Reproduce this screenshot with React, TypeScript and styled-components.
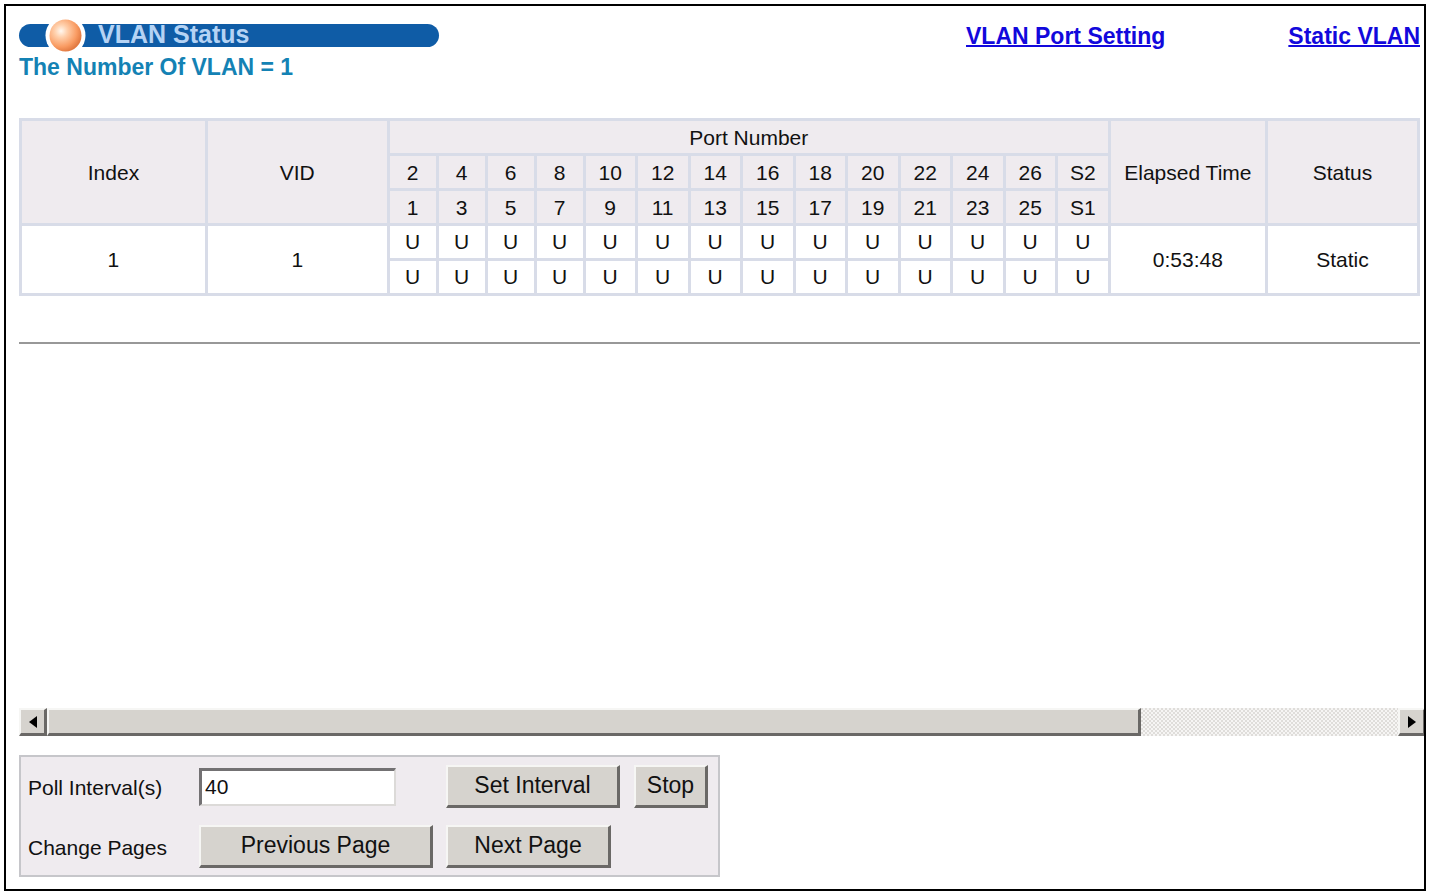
import React, { useState } from "react";
import styled, { createGlobalStyle } from "styled-components";

const GlobalStyle = createGlobalStyle`
  *, *::before, *::after { box-sizing: border-box; }
  body {
    margin: 0;
    background: #fff;
    color: #111;
    font-family: "Liberation Sans", Arial, Helvetica, sans-serif;
    font-size: 21px;
  }
`;

const Frame = styled.div`
  display: flex;
  flex-direction: column;
  min-height: calc(100vh - 8px);
  margin: 4px 3px 4px 4px;
  padding: 18px 0 12px 13px;
  border: 2px solid #000;
  overflow: hidden;
`;

const Content = styled.main`
  flex: 1;
  padding-right: 4px;
`;

const Header = styled.header`
  display: flex;
  align-items: flex-start;
  justify-content: space-between;
`;

const TitleBar = styled.div`
  display: flex;
  align-items: flex-start;
  width: 420px;
  height: 23px;
  padding-left: 26px;
  border-radius: 12px;
  background: #0f5ca6;
`;

const Ball = styled.svg`
  flex: none;
  width: 40px;
  height: 23px;
  overflow: visible;
`;

const Title = styled.h1`
  margin: 0 0 0 13px;
  color: #b5d3f4;
  font-size: 25px;
  line-height: 20px;
`;

const Links = styled.nav`
  display: flex;
  gap: 123px;
`;

const NavLink = styled.a`
  color: #1208dc;
  font-size: 23px;
  font-weight: bold;
  line-height: 25px;
  text-decoration-thickness: 2px;
  white-space: nowrap;
`;

const Summary = styled.h2`
  margin: 5px 0 38px;
  color: #1482b4;
  font-size: 23px;
  line-height: 26px;
`;

const Table = styled.table`
  width: 100%;
  table-layout: fixed;
  border-collapse: collapse;
  text-align: center;
`;

const Col = styled.col<{ $w?: string }>`
  width: ${(p) => p.$w ?? "auto"};
`;

const HeadCell = styled.th`
  height: 35px;
  padding: 2px 0 0;
  border: 3px solid #d8dce8;
  background: #efebef;
  font-weight: normal;
  line-height: 24px;
  white-space: nowrap;
`;

const Cell = styled.td`
  height: 35px;
  padding: 0;
  border: 3px solid #d8dce8;
  line-height: 24px;
`;

const Rule = styled.hr`
  height: 2px;
  margin: 46px 0 0;
  border: 0;
  background: #989898;
`;

const ScrollBar = styled.div`
  display: flex;
  height: 28px;
  margin: 0 -2px 19px 0;
`;

const raised = `
  border-style: solid;
  border-width: 2px 3px 3px 2px;
  border-color: #f6f6f4 #6a6866 #6a6866 #f6f6f4;
  background: #d6d3ce;
`;

const ArrowButton = styled.button`
  display: flex;
  flex: none;
  align-items: center;
  justify-content: center;
  width: 28px;
  padding: 0;
  ${raised}
`;

const Track = styled.div`
  flex: 1;
  background: repeating-conic-gradient(#dfddda 0 25%, #f6f5f4 0 50%) 0 0 / 4px 4px;
`;

const Thumb = styled.div`
  width: 81%;
  height: 100%;
  ${raised}
`;

const Panel = styled.form`
  display: grid;
  grid-template-columns: 171px 247px 188px auto;
  grid-auto-rows: 43px;
  row-gap: 17px;
  align-items: center;
  justify-items: start;
  align-self: flex-start;
  padding: 8px 10px 7px 7px;
  border: 2px solid #c6c6ca;
  background: #efebef;
  white-space: nowrap;
`;

const Label = styled.label`
  padding-top: 2px;
  line-height: 24px;
`;

const PanelText = styled.span`
  padding-top: 2px;
  line-height: 24px;
`;

const TextBox = styled.input`
  width: 197px;
  height: 38px;
  padding: 0 3px;
  border-style: solid;
  border-width: 3px 2px 2px 3px;
  border-color: #737173 #dcdad8 #dcdad8 #737173;
  background: #fff;
  color: #111;
  font: inherit;
`;

const Button = styled.button<{ $width: number }>`
  width: ${(p) => p.$width}px;
  height: 43px;
  padding: 0 0 2px;
  ${raised}
  color: #111;
  font: inherit;
  font-size: 23px;
`;

const upper = ["2", "4", "6", "8", "10", "12", "14", "16", "18", "20", "22", "24", "26", "S2"];
const lower = ["1", "3", "5", "7", "9", "11", "13", "15", "17", "19", "21", "23", "25", "S1"];

// Single-digit ports get the narrower columns.
const portWidth = (i: number) => (i < 4 ? "49px" : i % 2 ? "53px" : "52px");

export default function App() {
  const [interval, setPollInterval] = useState("40");

  return (
    <>
      <GlobalStyle />
      <Frame>
        <Content>
          <Header>
            <TitleBar>
              <Ball viewBox="0 0 40 23" aria-hidden="true">
                <defs>
                  <radialGradient id="ball" cx="36%" cy="36%" r="66%">
                    <stop offset="0" stopColor="#fff8f0" />
                    <stop offset="0.3" stopColor="#ffd0ac" />
                    <stop offset="0.75" stopColor="#f99b62" />
                    <stop offset="1" stopColor="#e27a42" />
                  </radialGradient>
                </defs>
                <circle cx="20.5" cy="11.5" r="20" fill="#fff" />
                <circle cx="20.5" cy="11.5" r="16" fill="url(#ball)" />
              </Ball>
              <Title>VLAN Status</Title>
            </TitleBar>
            <Links>
              <NavLink href="#port-setting">VLAN Port Setting</NavLink>
              <NavLink href="#static-vlan">Static VLAN</NavLink>
            </Links>
          </Header>
          <Summary>The Number Of VLAN = 1</Summary>
          <Table>
            <colgroup>
              <Col $w="13.3%" />
              <Col $w="13%" />
              {upper.map((port, i) => (
                <Col key={port} $w={portWidth(i)} />
              ))}
              <Col $w="157px" />
              <Col />
            </colgroup>
            <thead>
              <tr>
                <HeadCell rowSpan={3}>Index</HeadCell>
                <HeadCell rowSpan={3}>VID</HeadCell>
                <HeadCell colSpan={14}>Port Number</HeadCell>
                <HeadCell rowSpan={3}>Elapsed Time</HeadCell>
                <HeadCell rowSpan={3}>Status</HeadCell>
              </tr>
              <tr>{upper.map((port) => <HeadCell key={port}>{port}</HeadCell>)}</tr>
              <tr>{lower.map((port) => <HeadCell key={port}>{port}</HeadCell>)}</tr>
            </thead>
            <tbody>
              <tr>
                <Cell rowSpan={2}>1</Cell>
                <Cell rowSpan={2}>1</Cell>
                {upper.map((port) => <Cell key={port}>U</Cell>)}
                <Cell rowSpan={2}>0:53:48</Cell>
                <Cell rowSpan={2}>Static</Cell>
              </tr>
              <tr>{lower.map((port) => <Cell key={port}>U</Cell>)}</tr>
            </tbody>
          </Table>
          <Rule />
        </Content>
        <ScrollBar>
          <ArrowButton type="button" aria-label="Scroll left">
            <svg width="8" height="12" viewBox="0 0 8 12"><path d="M8 0v12L0 6z" /></svg>
          </ArrowButton>
          <Track>
            <Thumb />
          </Track>
          <ArrowButton type="button" aria-label="Scroll right">
            <svg width="8" height="12" viewBox="0 0 8 12"><path d="M0 0v12l8-6z" /></svg>
          </ArrowButton>
        </ScrollBar>
        <Panel onSubmit={(e) => e.preventDefault()}>
          <Label htmlFor="poll">Poll Interval(s)</Label>
          <TextBox id="poll" value={interval} onChange={(e) => setPollInterval(e.target.value)} />
          <Button type="submit" $width={174}>Set Interval</Button>
          <Button type="button" $width={74}>Stop</Button>
          <PanelText>Change Pages</PanelText>
          <Button type="button" $width={234}>Previous Page</Button>
          <Button type="button" $width={165}>Next Page</Button>
        </Panel>
      </Frame>
    </>
  );
}
